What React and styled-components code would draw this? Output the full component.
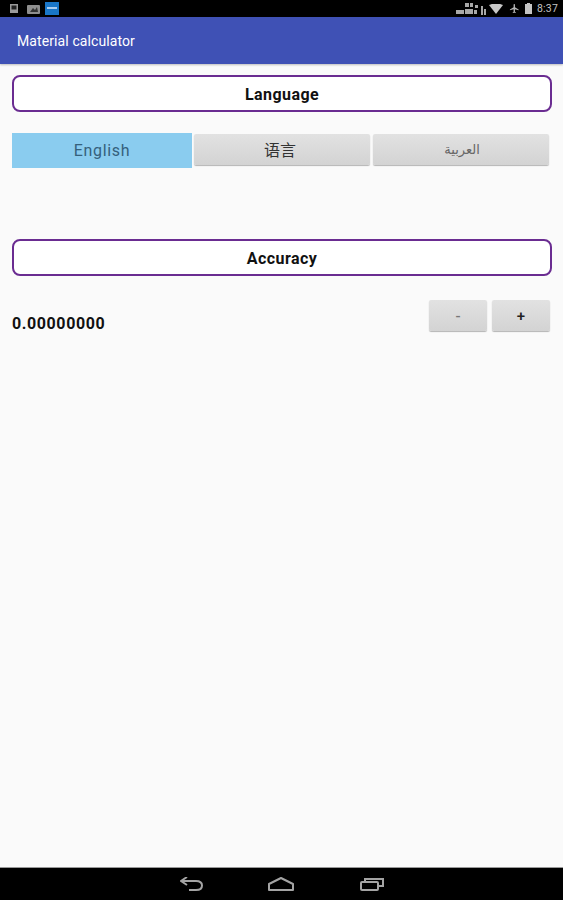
import styled, { createGlobalStyle } from "styled-components";

const Global = createGlobalStyle`
  html, body {
    margin: 0;
    padding: 0;
    height: 100%;
    background: #fafafa;
  }
  #root {
    height: 100%;
  }
`;

const Screen = styled.div`
  width: 563px;
  height: 900px;
  display: flex;
  flex-direction: column;
  overflow: hidden;
  font-family: Roboto, "Liberation Sans", sans-serif;
`;

const StatusBar = styled.div`
  height: 17px;
  flex-shrink: 0;
  background: #000;
  display: flex;
  align-items: center;
  justify-content: space-between;
  padding: 0 5px 0 9px;
`;

const StatusGroup = styled.div`
  display: flex;
  align-items: center;
  gap: ${(p) => p.$gap}px;
`;

const Clock = styled.span`
  font-size: 10.5px;
  color: #c4c4c4;
  letter-spacing: 0.2px;
`;

const AppBar = styled.div`
  height: 47px;
  flex-shrink: 0;
  box-sizing: border-box;
  background: #3f51b5;
  color: #fff;
  font-size: 14px;
  letter-spacing: 0.1px;
  display: flex;
  align-items: center;
  padding: 0 0 0 17px;
  box-shadow: 0 1px 2px rgba(0, 0, 0, 0.25);
  position: relative;
`;

const Content = styled.div`
  flex: 1;
  display: flex;
  flex-direction: column;
  padding: 11px 11px 0 12px;
  background: #fafafa;
`;

const SectionTitle = styled.div`
  height: 37px;
  box-sizing: border-box;
  border: 2px solid #6a2c91;
  border-radius: 8px;
  background: #fff;
  display: flex;
  align-items: center;
  justify-content: center;
  padding-top: 2px;
  font-size: 16px;
  font-weight: 700;
  letter-spacing: 0.45px;
  color: #111;
`;

const LanguageRow = styled.div`
  display: grid;
  grid-template-columns: 180px 176px 177px;
  gap: 2px;
  align-items: start;
  margin-top: 21px;
  height: 106px;
  margin-right: 1px;
`;

const GrayButton = styled.div`
  height: 31px;
  margin-top: 1px;
  margin-left: ${(p) => p.$inset || 0}px;
  border-radius: 2px;
  background: linear-gradient(#e2e2e2, #d3d3d3);
  box-shadow: 0 1px 1px rgba(0, 0, 0, 0.28);
  display: flex;
  align-items: center;
  justify-content: center;
  color: #333;
  font-size: ${(p) => p.$size || 16}px;
`;

const CjkLabel = styled.span`
  font-family: "Noto Sans CJK SC", sans-serif;
  margin: -1px 4px 0 0;
`;

const ArabicLabel = styled.span`
  font-family: "DejaVu Sans", sans-serif;
  color: #666;
  margin-left: 2px;
`;

const ActiveButton = styled.div`
  height: 35px;
  background: #8accef;
  display: flex;
  align-items: center;
  justify-content: center;
  color: #35607c;
  font-size: 16px;
  letter-spacing: 0.7px;
`;

const AccuracyRow = styled.div`
  display: flex;
  align-items: flex-start;
  justify-content: space-between;
  margin-top: 24px;
  padding-right: 2px;
`;

const Value = styled.div`
  font-size: 16px;
  font-weight: 700;
  letter-spacing: 0.6px;
  color: #111;
  margin-top: 14px;
`;

const Stepper = styled.div`
  display: flex;
  gap: 5px;
`;

const StepButton = styled(GrayButton)`
  width: 58px;
  margin-top: 0;
  font-weight: 500;
  font-size: 15px;
  color: ${(p) => p.$color};
`;

const NavBar = styled.div`
  height: 33px;
  flex-shrink: 0;
  background: #000;
  border-top: 1px solid #999;
  box-sizing: border-box;
  display: flex;
  align-items: center;
  gap: 64px;
  padding-left: 180px;
`;

const NavIcon = styled.svg`
  fill: none;
  stroke: #a4a4a4;
  stroke-width: 2;
`;

const App = () => {
  return (
    <>
      <Global />
      <Screen>
        <StatusBar>
          <StatusGroup $gap={8}>
            <svg width="10" height="9" viewBox="0 0 10 9">
              <rect x="1" y="0" width="8" height="9" fill="#9a9a9a" />
              <rect x="2.5" y="1.5" width="5" height="4" fill="#222" />
            </svg>
            <svg width="13" height="10" viewBox="0 0 13 10">
              <rect x="0" y="1" width="13" height="9" rx="1" fill="#8e8e8e" />
              <path d="M3 8 L6 4 L8 6 L10 3 L11 8 Z" fill="#333" />
            </svg>
            <svg width="14" height="13" viewBox="0 0 14 13" style={{ marginLeft: -3 }}>
              <rect width="14" height="13" fill="#1976c8" />
              <rect x="2" y="5" width="10" height="2" fill="#a9cdf0" />
            </svg>
          </StatusGroup>
          <StatusGroup $gap={5}>
            <svg width="30" height="13" viewBox="0 0 30 13" fill="#a8a8a8">
              <rect x="0" y="8" width="8" height="4" />
              <rect x="9" y="1" width="4" height="4" />
              <rect x="14" y="1" width="3" height="4" />
              <rect x="9" y="7" width="8" height="5" />
              <rect x="19" y="3" width="3" height="3" />
              <rect x="18" y="8" width="3" height="4" />
              <rect x="25" y="4" width="2" height="9" />
              <rect x="28" y="7" width="2" height="6" />
            </svg>
            <svg width="14" height="10" viewBox="0 0 14 10" style={{ marginLeft: -2 }}>
              <path d="M0 1 Q7 -2 14 1 L7 10 Z" fill="#c8c8c8" />
            </svg>
            <svg width="11" height="11" viewBox="0 0 24 24" fill="#b4b4b4" style={{ marginLeft: 1 }}>
              <path d="M21 16v-2l-8-5V3.500a1.500 1.500 0 0 0-3 0V9l-8 5v2l8-2.500V19l-2 1.500V22l3.500-1 3.500 1v-1.500L13 19v-5.500z" />
            </svg>
            <svg width="7" height="11" viewBox="0 0 7 11">
              <rect x="2" y="0" width="3" height="1" fill="#c4c4c4" />
              <rect x="0" y="1" width="7" height="10" fill="#c4c4c4" />
            </svg>
            <Clock>8:37</Clock>
          </StatusGroup>
        </StatusBar>
        <AppBar>Material calculator</AppBar>
        <Content>
          <SectionTitle>Language</SectionTitle>
          <LanguageRow>
            <ActiveButton>English</ActiveButton>
            <GrayButton>
              <CjkLabel>语言</CjkLabel>
            </GrayButton>
            <GrayButton $inset={1} $size={13}>
              <ArabicLabel lang="ar">العربية</ArabicLabel>
            </GrayButton>
          </LanguageRow>
          <SectionTitle>Accuracy</SectionTitle>
          <AccuracyRow>
            <Value>0.00000000</Value>
            <Stepper>
              <StepButton $color="#777">-</StepButton>
              <StepButton $color="#222">+</StepButton>
            </Stepper>
          </AccuracyRow>
        </Content>
        <NavBar>
          <NavIcon width="24" height="14" viewBox="0 0 24 14">
            <path d="M1 4 H16 Q22 4 22 8.500 Q22 13 16 13 H9" />
            <path d="M7 0 L1 4 L7 8" />
          </NavIcon>
          <NavIcon width="28" height="14" viewBox="0 0 28 14">
            <path d="M1 7 L13 1 L25 7 V13 H1 Z" strokeLinejoin="round" />
          </NavIcon>
          <NavIcon width="24" height="14" viewBox="0 0 24 14">
            <rect x="1" y="5" width="17" height="8" rx="1" />
            <path d="M5 5 V2 H23 V9 H18" />
          </NavIcon>
        </NavBar>
      </Screen>
    </>
  );
};

export default App;
